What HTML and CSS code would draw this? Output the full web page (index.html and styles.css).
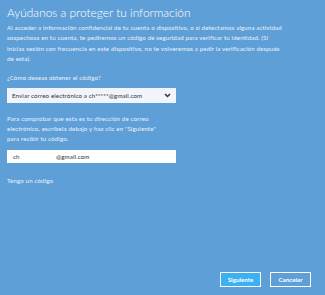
FILE: index.html
```html
<!DOCTYPE html>
<html lang="es">
  <head>
    <meta charset="UTF-8" />
    <title>Ayúdanos a proteger tu información</title>
    <link rel="stylesheet" href="styles.css">
  </head>
  <body>
    <div class="page">
      <h1>Ayúdanos a proteger tu información</h1>
      <p class="intro">
        Al acceder a información confidencial de tu cuenta o dispositivo, o si detectamos alguna actividad
        sospechosa en tu cuenta, te pediremos un código de seguridad para verificar tu identidad. (Si<br>
        inicias sesión con frecuencia en este dispositivo, no te volveremos a pedir la verificación después<br>
        de esta).
      </p>

      <label class="field-label" for="method">¿Cómo deseas obtener el código?</label>
      <div class="select" id="method">
        <span>Enviar correo electrónico a ch*****@gmail.com</span>
        <svg class="chevron" width="7" height="5" viewBox="0 0 7 5">
          <path d="M1 1 L3.5 3.5 L6 1" fill="none" stroke="#333" stroke-width="1.5" />
        </svg>
      </div>

      <p class="hint">
        Para comprobar que esta es tu dirección de correo electrónico, escríbela debajo y haz clic en "Siguiente"
        para recibir tu código.
      </p>

      <div class="text-input">
        <span class="user">ch</span><span>@gmail.com</span>
      </div>

      <a class="link" href="#">Tengo un código</a>

      <div class="actions">
        <button class="btn primary">Siguiente</button>
        <button class="btn">Cancelar</button>
      </div>
    </div>
  </body>
</html>
```

FILE: styles.css
```css
html,
body {
  margin: 0;
  height: 100%;
}

body {
  background: #5f9fd7;
  font-family: "Lato", "Open Sans", sans-serif;
  color: #eaf2fb;
}

.page {
  box-sizing: border-box;
  height: 295px;
  padding: 3px 7px 8px 7px;
  display: flex;
  flex-direction: column;
}

h1 {
  margin: 0;
  font-size: 11.9px;
  font-weight: 300;
  color: #ffffff;
  line-height: 20px;
}

.intro,
.field-label,
.hint,
.link {
  font-size: 6.2px;
  letter-spacing: 0.12px;
}

.intro {
  margin: 0;
  line-height: 10.4px;
  max-width: 300px;
}

.field-label {
  margin-top: 8px;
  line-height: 10px;
}

.select {
  margin-top: 5px;
  width: 169px;
  height: 15px;
  box-sizing: border-box;
  background: #f1f5fb;
  color: #333;
  font-size: 6.2px;
  letter-spacing: 0.1px;
  display: flex;
  align-items: center;
  justify-content: space-between;
  padding: 0 5px 0 5px;
}

.chevron {
  display: block;
}

.hint {
  margin: 11px 0 0 0;
  line-height: 10px;
  max-width: 160px;
}

.text-input {
  margin-top: 6px;
  width: 169px;
  height: 13px;
  box-sizing: border-box;
  background: #ffffff;
  color: #333;
  font-size: 6.2px;
  letter-spacing: 0.1px;
  display: flex;
  align-items: center;
  padding: 0 6px;
}

.text-input .user {
  width: 43px;
}

.link {
  margin-top: 14px;
  color: #eaf2fb;
  text-decoration: none;
}

.actions {
  margin-top: auto;
  display: flex;
  justify-content: flex-end;
  gap: 9px;
  padding-right: 7px;
}

.btn {
  font-family: inherit;
  font-size: 6.2px;
  font-weight: 700;
  color: #ffffff;
  background: transparent;
  border: 1px solid #ffffff;
  height: 15px;
  width: 41px;
  padding: 0;
}

.btn.primary {
  background: #3bb0f2;
}
```
